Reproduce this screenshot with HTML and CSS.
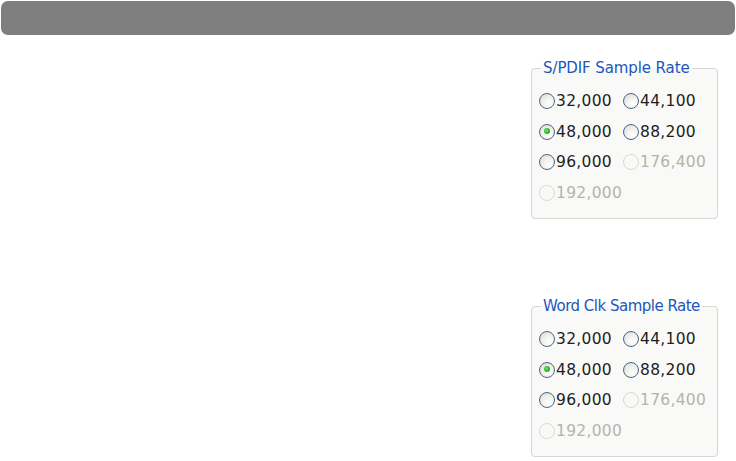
FILE: index.html
```html
<!DOCTYPE html>
<html>
<head>
<meta charset="utf-8">
<link rel="stylesheet" href="styles.css">
</head>
<body>
<div class="titlebar"></div>
<div class="panel">
  <fieldset class="group">
    <legend class="group-title">S/PDIF Sample Rate</legend>
    <div class="options">
      <label class="opt"><span class="radio"></span>32,000</label>
      <label class="opt"><span class="radio"></span>44,100</label>
      <label class="opt"><span class="radio checked"></span>48,000</label>
      <label class="opt"><span class="radio"></span>88,200</label>
      <label class="opt"><span class="radio"></span>96,000</label>
      <label class="opt disabled"><span class="radio"></span>176,400</label>
      <label class="opt disabled"><span class="radio"></span>192,000</label>
    </div>
  </fieldset>
  <fieldset class="group group-second">
    <legend class="group-title group-title-wide">Word Clk Sample Rate</legend>
    <div class="options">
      <label class="opt"><span class="radio"></span>32,000</label>
      <label class="opt"><span class="radio"></span>44,100</label>
      <label class="opt"><span class="radio checked"></span>48,000</label>
      <label class="opt"><span class="radio"></span>88,200</label>
      <label class="opt"><span class="radio"></span>96,000</label>
      <label class="opt disabled"><span class="radio"></span>176,400</label>
      <label class="opt disabled"><span class="radio"></span>192,000</label>
    </div>
  </fieldset>
</div>
</body>
</html>
```
FILE: styles.css
```css
html, body {
  margin: 0;
  padding: 0;
  background: #ffffff;
}
body {
  width: 736px;
  height: 461px;
  overflow: hidden;
  font-family: "DejaVu Sans", Verdana, sans-serif;
}
.titlebar {
  margin: 1px 1px 0 1px;
  height: 34px;
  background: #7f7f7f;
  border-radius: 7px;
}
.panel {
  display: flex;
  flex-direction: column;
  align-items: flex-end;
  padding: 25px 18px 0 0;
}
.group {
  box-sizing: border-box;
  width: 187px;
  height: 159px;
  margin: 0;
  padding: 10px 8px 0 7px;
  border: 1px solid #d6d6d2;
  border-radius: 4px;
  background: #f9f9f8;
  min-inline-size: 0;
}
.group-second {
  margin-top: 79px;
}
.group-title {
  margin-left: 2px;
  padding: 0 2px;
  font-size: 15px;
  line-height: 16px;
  color: #1f56b8;
  letter-spacing: -0.1px;
  white-space: nowrap;
}
.group-title-wide {
  letter-spacing: -0.5px;
}
.options {
  display: grid;
  grid-template-columns: 84px 1fr;
  grid-auto-rows: 30.5px;
  align-items: center;
}
.opt {
  display: flex;
  align-items: center;
  gap: 1px;
  font-size: 15.5px;
  color: #1e1e1e;
  letter-spacing: 0.3px;
  white-space: nowrap;
}
.radio {
  box-sizing: border-box;
  width: 16px;
  height: 16px;
  border-radius: 50%;
  border: 1.5px solid #4d6683;
  background: radial-gradient(circle at 65% 70%, #ffffff 0%, #f1f1ee 45%, #d6d6d1 100%);
  position: relative;
  flex: none;
}
.radio.checked::after {
  content: "";
  position: absolute;
  left: 3.5px;
  top: 3.5px;
  width: 6px;
  height: 6px;
  border-radius: 50%;
  background: radial-gradient(circle at 40% 40%, #6ee86e 0%, #27b027 60%, #1a8a1a 100%);
}
.opt.disabled {
  color: #b4b4ac;
}
.opt.disabled .radio {
  border: 1px solid #d9d9d4;
  background: #f9f9f8;
}
```
